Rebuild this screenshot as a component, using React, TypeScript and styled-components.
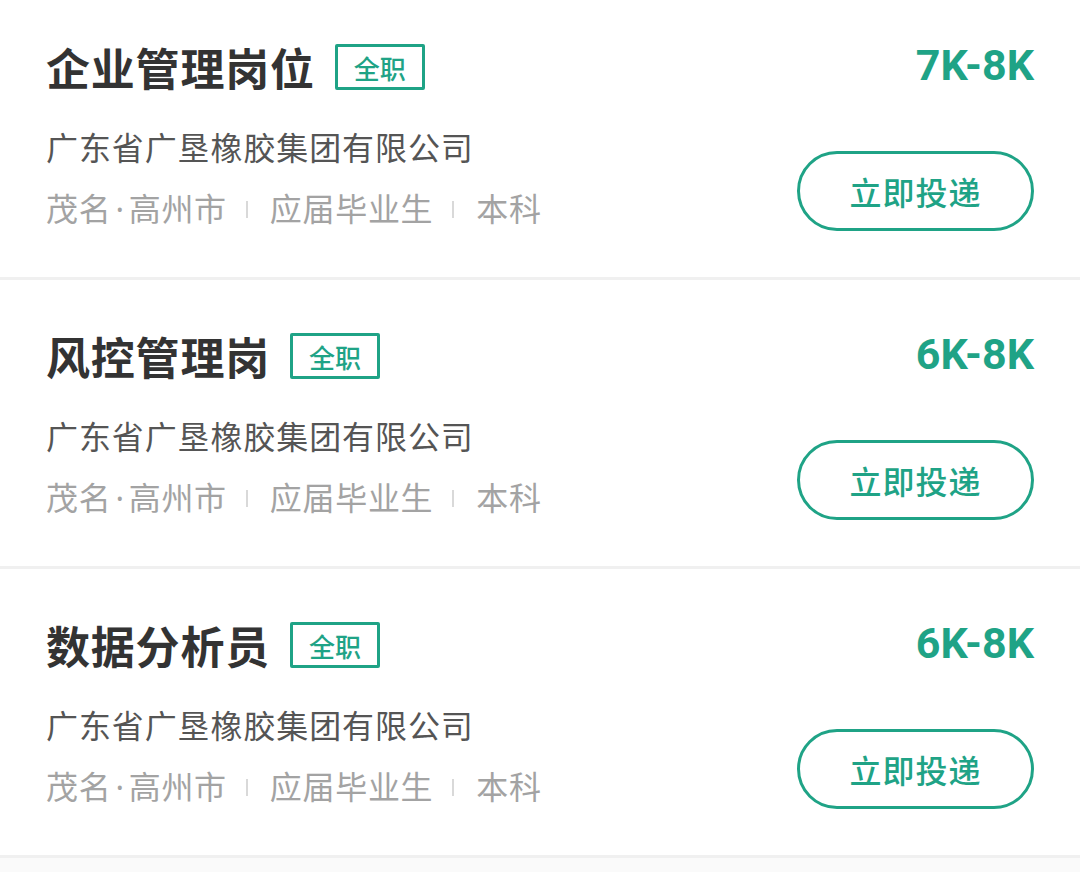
import React from "react";
import styled, { createGlobalStyle } from "styled-components";

interface IJob {
  title: string;
  salary: string;
  company: string;
  city: string;
  district: string;
  experience: string;
  degree: string;
}

const jobs: IJob[] = [
  {
    title: "企业管理岗位",
    salary: "7K-8K",
    company: "广东省广垦橡胶集团有限公司",
    city: "茂名",
    district: "高州市",
    experience: "应届毕业生",
    degree: "本科",
  },
  {
    title: "风控管理岗",
    salary: "6K-8K",
    company: "广东省广垦橡胶集团有限公司",
    city: "茂名",
    district: "高州市",
    experience: "应届毕业生",
    degree: "本科",
  },
  {
    title: "数据分析员",
    salary: "6K-8K",
    company: "广东省广垦橡胶集团有限公司",
    city: "茂名",
    district: "高州市",
    experience: "应届毕业生",
    degree: "本科",
  },
];

const GlobalStyle = createGlobalStyle`
  html, body {
    margin: 0;
    padding: 0;
    background: #fafafa;
    font-family: "Noto Sans CJK SC", "Noto Sans", sans-serif;
  }
  body {
    overflow: hidden;
  }
`;

const List = styled.ul`
  list-style: none;
  margin: -9px 0 0;
  padding: 0;
`;

const Card = styled.li`
  display: flex;
  justify-content: space-between;
  box-sizing: content-box;
  height: 192px;
  padding: 48px 46px 46px;
  background: #fff;
  border-bottom: 3px solid #f0f0f0;
`;

const Info = styled.div`
  display: flex;
  flex-direction: column;
`;

const TitleRow = styled.div`
  display: flex;
  align-items: center;
  height: 56px;
`;

const Title = styled.h3`
  margin: 0;
  font-size: 44px;
  font-weight: 700;
  color: #333;
  letter-spacing: 0.8px;
`;

const Tag = styled.span`
  margin-left: 20px;
  display: inline-flex;
  align-items: center;
  justify-content: center;
  width: 90px;
  height: 46px;
  box-sizing: border-box;
  border: 3px solid #1fa386;
  border-radius: 2px;
  font-size: 26px;
  font-weight: 500;
  color: #1fa386;
`;

const Company = styled.div`
  margin-top: 29px;
  font-size: 32px;
  line-height: 44px;
  letter-spacing: 0.9px;
  color: #555;
`;

const Meta = styled.div`
  margin-top: 19px;
  display: flex;
  align-items: center;
  font-family: "Noto Sans", "Noto Sans CJK SC", sans-serif;
  font-size: 32px;
  line-height: 44px;
  letter-spacing: 0.7px;
  color: #a3a3a3;
`;

const Dot = styled.span`
  margin: 0 4px;
`;

const Divider = styled.span`
  width: 2px;
  height: 17px;
  margin: 0 22px 0 19px;
  background: #d9d9d9;
`;

const Side = styled.div`
  display: flex;
  flex-direction: column;
  justify-content: space-between;
  align-items: flex-end;
`;

const Salary = styled.div`
  font-family: Roboto, "Noto Sans", sans-serif;
  font-size: 43px;
  font-weight: 700;
  line-height: 56px;
  color: #1fa386;
  margin-top: -2px;
`;

const ApplyBtn = styled.button`
  width: 237px;
  height: 80px;
  box-sizing: border-box;
  border: 3px solid #1fa386;
  border-radius: 40px;
  background: #fff;
  color: #1fa386;
  font-family: "Noto Sans CJK SC", sans-serif;
  font-size: 32px;
  font-weight: 500;
  letter-spacing: 1px;
  cursor: pointer;
`;

const JobCard = ({ job }: { job: IJob }) => (
  <Card>
    <Info>
      <TitleRow>
        <Title>{job.title}</Title>
        <Tag>全职</Tag>
      </TitleRow>
      <Company>{job.company}</Company>
      <Meta>
        <span>
          {job.city}
          <Dot>·</Dot>
          {job.district}
        </span>
        <Divider />
        <span>{job.experience}</span>
        <Divider />
        <span>{job.degree}</span>
      </Meta>
    </Info>
    <Side>
      <Salary>{job.salary}</Salary>
      <ApplyBtn>立即投递</ApplyBtn>
    </Side>
  </Card>
);

const App = () => (
  <>
    <GlobalStyle />
    <List>
      {jobs.map((job, index) => (
        <JobCard key={index} job={job} />
      ))}
    </List>
  </>
);

export default App;
